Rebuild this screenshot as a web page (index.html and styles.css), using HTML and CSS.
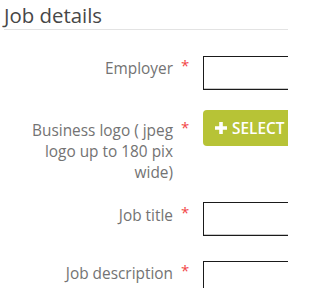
FILE: index.html
```html
<!DOCTYPE html>
<html>
<head>
<meta charset="utf-8">
<link rel="stylesheet" href="styles.css">
</head>
<body>
<div class="page">
<div class="section">
  <h2 class="section-title">Job details</h2>
  <div class="form">
    <div class="row">
      <div class="label"><span class="label-text">Employer</span><span class="req">*</span></div>
      <div class="control"><input class="input" type="text"></div>
    </div>
    <div class="row row-tall">
      <div class="label label-offset"><span class="label-text">Business logo ( jpeg logo up to 180 pix wide)</span><span class="req">*</span></div>
      <div class="control">
        <button class="btn-select" type="button">
          <svg class="plus" width="12" height="12" viewBox="0 0 12 12"><path d="M4.2 0h3.6v4.2H12v3.6H7.8V12H4.2V7.8H0V4.2h4.2z" fill="#fff"/></svg>
          <span>SELECT FILE</span>
        </button>
      </div>
    </div>
    <div class="row row-wide-gap">
      <div class="label label-low"><span class="label-text">Job title</span><span class="req">*</span></div>
      <div class="control"><input class="input" type="text"></div>
    </div>
    <div class="row">
      <div class="label"><span class="label-text">Job description</span><span class="req">*</span></div>
      <div class="control"><input class="input" type="text"></div>
    </div>
  </div>
</div>
</div>
</body>
</html>
```
FILE: styles.css
```css
html, body {
  margin: 0;
  padding: 0;
  background: #fff;
}
body {
  font-family: "Open Sans", "Liberation Sans", sans-serif;
}
.page {
  width: 288px;
  height: 288px;
  overflow: hidden;
}
.section {
  padding-left: 4px;
}
.section-title {
  margin: 0;
  padding-top: 1px;
  font-size: 20.4px;
  line-height: 28px;
  font-weight: 400;
  color: #474747;
  border-bottom: 1px solid #e3e3e3;
}
.form {
  padding-top: 26px;
}
.row {
  display: flex;
  align-items: flex-start;
  margin-bottom: 20px;
}
.row-tall {
  margin-bottom: 19px;
}
.row-wide-gap {
  margin-bottom: 25px;
}
.label {
  display: flex;
  justify-content: flex-end;
  width: 199px;
  flex-shrink: 0;
  padding-top: 2px;
  font-size: 15.4px;
  line-height: 21px;
  color: #737373;
}
.label-offset {
  padding-top: 10px;
}
.label-low {
  padding-top: 3px;
}
.label-text {
  width: 146px;
  text-align: right;
}
.req {
  width: 30px;
  padding-left: 8px;
  box-sizing: border-box;
  color: #f24646;
  font-size: 15px;
  line-height: 15px;
}
.control {
  flex-shrink: 0;
}
.input {
  display: block;
  box-sizing: border-box;
  width: 200px;
  height: 34px;
  margin: 0;
  border: 1px solid #1a1a1a;
  border-radius: 0;
  box-shadow: inset 0 -1px 0 #c8c8c8;
  background: #fff;
  padding: 0 8px;
}
.btn-select {
  display: flex;
  align-items: center;
  gap: 5px;
  height: 36px;
  margin: 0;
  padding: 0 12px;
  border: none;
  border-radius: 4px;
  background: #b7c336;
  color: #fff;
  font-family: "Open Sans", "Liberation Sans", sans-serif;
  font-size: 15.4px;
  font-weight: 600;
  white-space: nowrap;
}
.plus {
  display: block;
  flex-shrink: 0;
}
```
